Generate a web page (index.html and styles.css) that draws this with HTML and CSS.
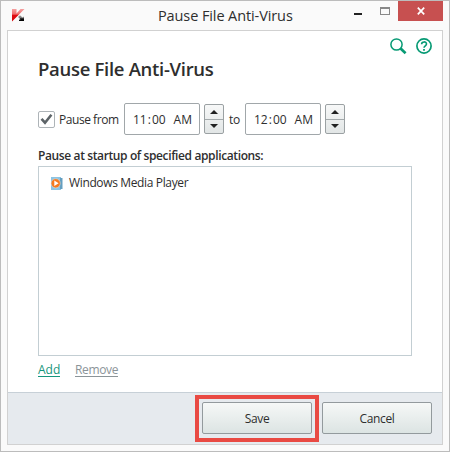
FILE: index.html
```html
<!DOCTYPE html>
<html lang="en">
<head>
<meta charset="utf-8">
<title>Pause File Anti-Virus</title>
<link rel="stylesheet" href="styles.css">
</head>
<body>
<div class="window">
  <header class="titlebar">
    <svg class="logo" width="13" height="13" viewBox="0 0 13 13">
      <defs>
        <linearGradient id="red" x1="0" y1="0" x2="0" y2="1"><stop offset="0" stop-color="#f5a0a0"/><stop offset=".42" stop-color="#ee6a6a"/><stop offset=".48" stop-color="#e00d12"/><stop offset="1" stop-color="#d8070d"/></linearGradient>
        <linearGradient id="black" x1="0" y1="0" x2="0" y2="1"><stop offset="0" stop-color="#999"/><stop offset=".5" stop-color="#777"/><stop offset=".6" stop-color="#111"/><stop offset="1" stop-color="#000"/></linearGradient>
      </defs>
      <path d="M0 0H4.5V4.5L8.5 0H12.5L0 12.5Z" fill="url(#red)"/>
      <path d="M6 8L8 6.2L10.5 8.5L12 7.5V12H7V10.7L8.5 10.2Z" fill="url(#black)"/>
    </svg>
    <span class="caption">Pause File Anti-Virus</span>
    <div class="controls">
      <span class="minimize"></span>
      <span class="maximize"></span>
      <span class="close"><svg width="8" height="8" viewBox="0 0 8 8"><path d="M.8 .7L7.2 7.3M7.2 .7L.8 7.3" stroke="#fff" stroke-width="1.7"/></svg></span>
    </div>
  </header>
  <main class="panel">
    <section class="content">
      <div class="tools">
        <svg width="17" height="17" viewBox="0 0 17 17" fill="none" stroke="#079a74"><circle cx="6.5" cy="6.5" r="5.6" stroke-width="1.5"/><path d="M10.6 10.6L15.6 15.3" stroke-width="2.7"/></svg>
        <svg width="16" height="16" viewBox="0 0 16 16" fill="none" stroke="#079a74"><circle cx="8" cy="8" r="7.1" stroke-width="1.7"/><path d="M5.6 6.2C5.6 3.2 10.5 3.2 10.5 6C10.5 7.8 8 7.8 8 9.7" stroke-width="1.6"/><path d="M8 11V12.7" stroke-width="1.8"/></svg>
      </div>
      <h1 class="heading">Pause File Anti-Virus</h1>
      <div class="schedule">
        <span class="checkbox"><svg width="13" height="12" viewBox="0 0 13 12"><path d="M1.5 5.8L5 9.7L11.4 1.8" fill="none" stroke="#5d6468" stroke-width="2.6"/></svg></span>
        <span class="from">Pause from</span>
        <span class="time"><span>11<span class="colon">:</span>00</span><span class="meridiem">AM</span></span>
        <span class="spinner"><i class="up"></i><i class="down"></i></span>
        <span class="to">to</span>
        <span class="time"><span>12<span class="colon">:</span>00</span><span class="meridiem">AM</span></span>
        <span class="spinner"><i class="up"></i><i class="down"></i></span>
      </div>
      <div class="label">Pause at startup of specified applications:</div>
      <div class="list">
        <div class="item">
          <svg width="13" height="13" viewBox="0 0 13 13"><path d="M1 0H11V13H1Z" fill="#8cc4e3"/><path d="M10 1H12.5V12H10Z" fill="#659fc0"/><circle cx="5.7" cy="6.3" r="4.6" fill="#f47a20" stroke="#dce8ee" stroke-width=".5"/><path d="M4.3 3.6V9L8.6 6.3Z" fill="#fff"/></svg>
          <span class="app">Windows Media Player</span>
        </div>
      </div>
      <div class="links"><a class="add">Add</a><a class="remove">Remove</a></div>
    </section>
    <footer class="footer">
      <div class="highlight"><div class="button save">Save</div></div>
      <div class="button cancel">Cancel</div>
    </footer>
  </main>
</div>
</body>
</html>
```
FILE: styles.css
```css
* { box-sizing: border-box; }
body {
  margin: 0;
  font: 12px/16px "Open Sans", "Noto Sans", sans-serif;
  letter-spacing: -.36px;
  color: #2e2e2e;
}
.window {
  width: 450px;
  height: 452px;
  padding: 0 6px 7px 6px;
  border: 1px solid #bcbcbc;
  background: #fafafa;
}
.titlebar {
  height: 29px;
  display: flex;
  align-items: flex-start;
}
.logo { margin: 8px 0 0 5px; flex: none; }
.caption {
  margin: 5px 0 0 133px;
  width: 140px;
  font-size: 14.5px;
  line-height: 20px;
  letter-spacing: -.1px;
  white-space: nowrap;
}
.controls { display: flex; margin-left: auto; }
.minimize { width: 8px; height: 2px; margin: 12px 18px 0 0; background: #222; }
.maximize { width: 10px; height: 8px; margin: 6px 8px 0 0; border: 1px solid #888; border-top-width: 2px; }
.close {
  width: 45px;
  height: 20px;
  display: flex;
  align-items: center;
  justify-content: center;
  background: #c75050;
}
.panel {
  height: 415px;
  border: 1px solid #d1d1d1;
  background: #fff;
}
.content { position: relative; height: 361px; padding: 24px 30px 0; }
.tools { position: absolute; top: 7px; right: 10px; display: flex; gap: 9px; }
.heading {
  margin: 0;
  font-size: 18.5px;
  line-height: 28px;
  font-weight: 600;
  letter-spacing: -.3px;
  white-space: nowrap;
}
.schedule { display: flex; align-items: center; height: 32px; margin-top: 20px; white-space: nowrap; }
.checkbox {
  width: 17px;
  height: 17px;
  display: flex;
  align-items: center;
  justify-content: center;
  border: 1px solid #aeb4b8;
  border-radius: 2px;
  flex: none;
}
.from { width: 65px; padding-top: 2px; margin-left: 4px; letter-spacing: -.45px; }
.time {
  width: 76px;
  height: 32px;
  padding: 8px 7px 6px 8px;
  display: flex;
  justify-content: space-between;
  letter-spacing: 0;
  border: 1px solid #a1a7aa;
  border-radius: 2px;
  flex: none;
}
.colon { margin: 0 1px; }
.spinner {
  width: 20px;
  height: 30px;
  margin-left: 4px;
  display: flex;
  flex-direction: column;
  border: 1px solid #9ba1a3;
  border-radius: 2px;
  background: linear-gradient(#f7f8f8, #e2e6e6);
  flex: none;
}
.up, .down { flex: 1; display: flex; justify-content: center; align-items: center; }
.down { border-top: 1px solid #a4aaac; }
.up::after, .down::after { content: ""; border: 4px solid transparent; border-top-width: 0; border-bottom: 4px solid #222; }
.down::after { transform: rotate(180deg); }
.to { width: 16px; padding-top: 1px; margin: 0 0 0 5px; }
.label { margin-top: 12px; line-height: 18px; font-weight: 600; letter-spacing: -.38px; white-space: nowrap; }
.list { height: 190px; margin-top: 1px; padding: 8px 11px; border: 1px solid #c3ced3; }
.item { display: flex; align-items: center; height: 16px; }
.app { margin-left: 6px; white-space: nowrap; }
.links { display: flex; margin-top: 6px; gap: 15px; }
.links a { height: 15px; line-height: 16px; border-bottom: 1px solid; }
.add { width: 22px; letter-spacing: 0; color: #16967c; }
.remove { color: #8b9498; }
.footer {
  height: 52px;
  display: flex;
  justify-content: flex-end;
  align-items: flex-start;
  padding: 2px 10px 0 0;
  border-top: 1px solid #c7d0d7;
  background: #e6eaee;
}
.highlight { width: 124px; height: 47px; padding: 3px; border: 4px solid #e94a43; }
.button {
  width: 110px;
  height: 32px;
  line-height: 31px;
  text-align: center;
  border: 1px solid #939a9d;
  border-radius: 2px;
  background: linear-gradient(#f6f8f7, #dce4e3);
}
.cancel { margin: 7px 0 0 3px; }
```
